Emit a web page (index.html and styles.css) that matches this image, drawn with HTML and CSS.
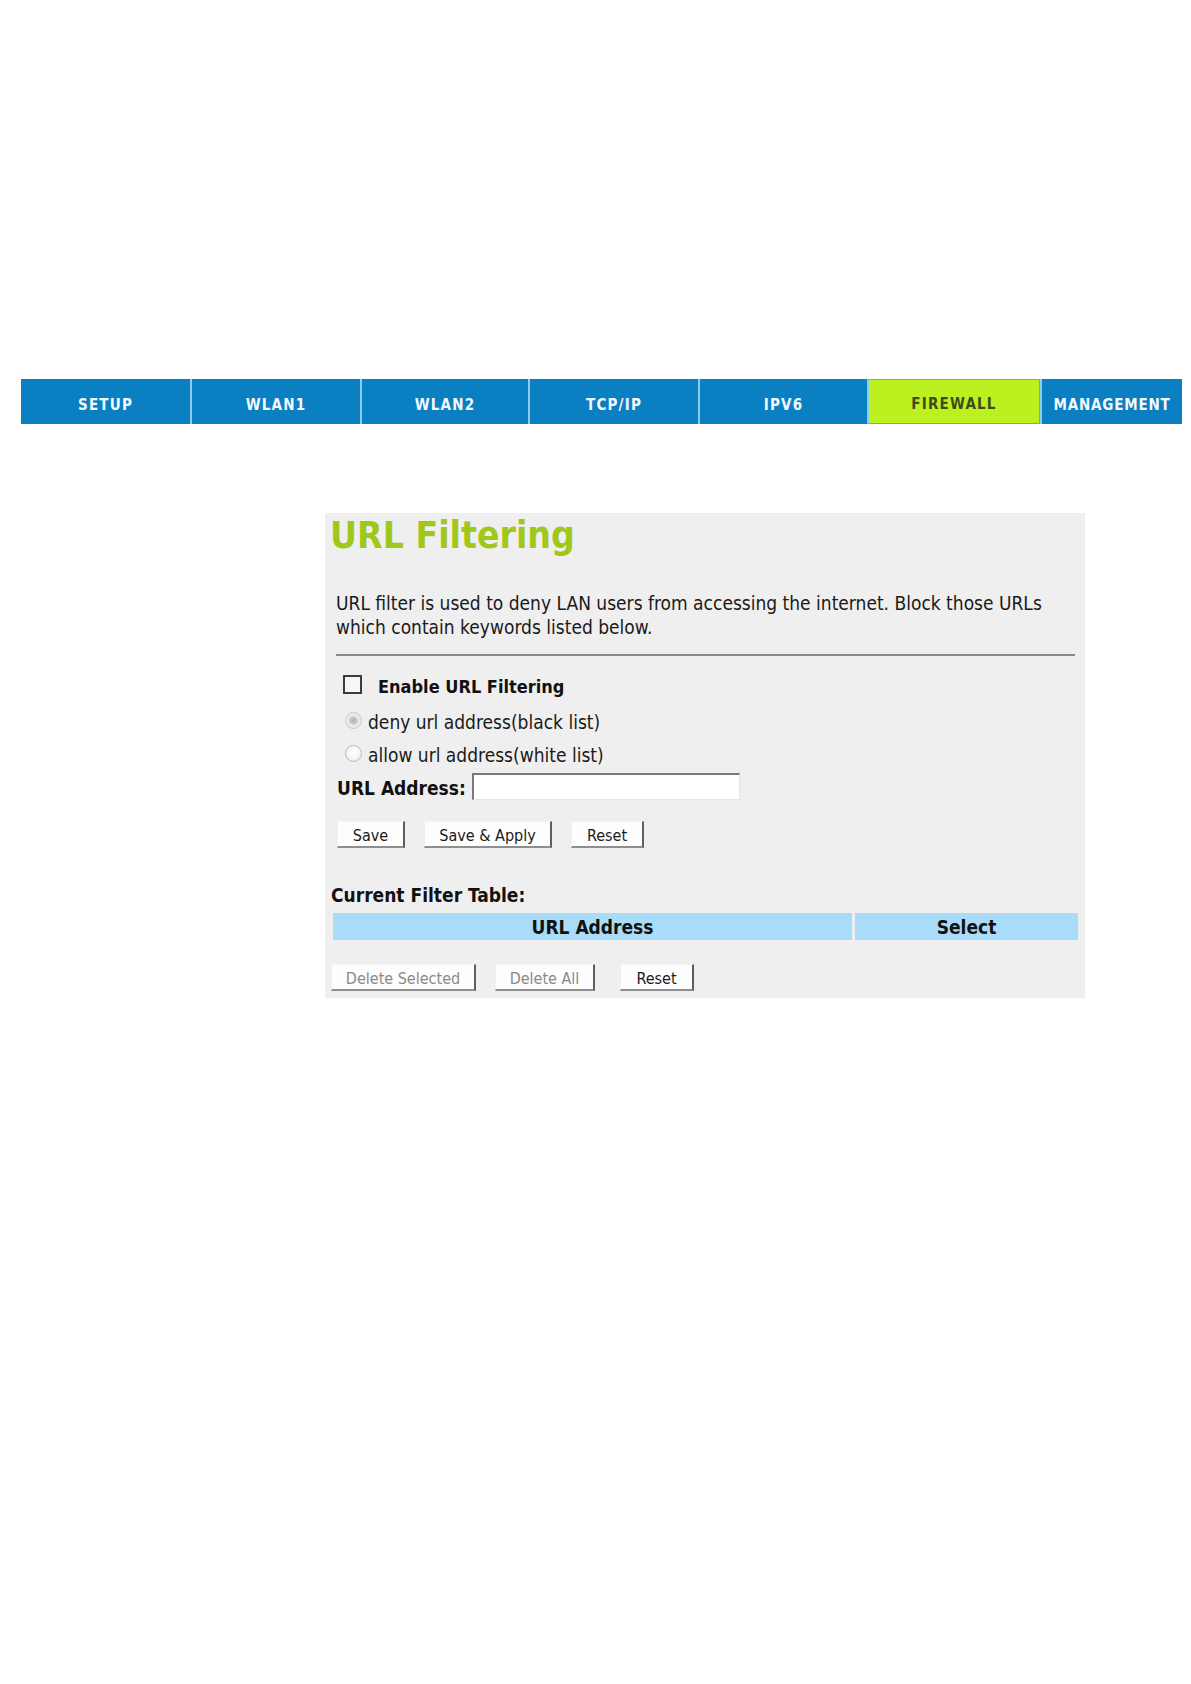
FILE: index.html
```html
<!DOCTYPE html>
<html lang="en">
<head>
<meta charset="utf-8">
<title>URL Filtering</title>
<link rel="stylesheet" href="styles.css">
</head>
<body>
<nav class="nav">
  <a class="tab">SETUP</a>
  <a class="tab">WLAN1</a>
  <a class="tab">WLAN2</a>
  <a class="tab">TCP/IP</a>
  <a class="tab">IPV6</a>
  <a class="tab active">FIREWALL</a>
  <a class="tab">MANAGEMENT</a>
</nav>

<section class="panel">
  <h1 class="title">URL Filtering</h1>
  <p class="desc">URL filter is used to deny LAN users from accessing the internet. Block those URLs which contain keywords listed below.</p>
  <div class="rule"></div>

  <label class="row row-enable">
    <input type="checkbox" class="check">
    <span class="bold-label enable-label">Enable URL Filtering</span>
  </label>
  <label class="row row-deny">
    <input type="radio" name="mode" class="radio radio-checked" checked disabled>
    <span class="opt">deny url address(black list)</span>
  </label>
  <label class="row row-allow">
    <input type="radio" name="mode" class="radio" disabled>
    <span class="opt">allow url address(white list)</span>
  </label>
  <div class="row row-url">
    <span class="bold-label url-label">URL Address:</span>
    <input type="text" class="text-input">
  </div>
  <div class="btn-row top-btns">
    <button class="btn btn-save">Save</button>
    <button class="btn btn-apply">Save &amp; Apply</button>
    <button class="btn btn-reset">Reset</button>
  </div>

  <div class="table-title">Current Filter Table:</div>
  <div class="filter-table">
    <div class="th th-url">URL Address</div>
    <div class="th th-select">Select</div>
  </div>
  <div class="btn-row bottom-btns">
    <button class="btn btn-del-sel" disabled>Delete Selected</button>
    <button class="btn btn-del-all" disabled>Delete All</button>
    <button class="btn btn-reset2">Reset</button>
  </div>
</section>
</body>
</html>
```

FILE: styles.css
```css
html, body {
  margin: 0;
  padding: 0;
  background: #ffffff;
}

body {
  font-family: "DejaVu Sans Condensed", "DejaVu Sans", sans-serif;
  font-stretch: condensed;
  color: #1a1a1a;
  width: 1191px;
  min-height: 1684px;
}

/* ---------- navigation ---------- */
.nav {
  margin: 379px 0 0 21px;
  width: 1161px;
  height: 45px;
  display: grid;
  grid-template-columns: 169px 170px 168px 170px 169px 173px 142px;
  background: #0a80c2;
}

.tab {
  display: flex;
  align-items: center;
  justify-content: center;
  padding-top: 6px;
  background: #0a80c2;
  color: #f4f9fc;
  font-family: "DejaVu Sans Condensed", "DejaVu Sans", sans-serif;
  font-stretch: condensed;
  font-weight: bold;
  font-size: 15px;
  letter-spacing: 1.2px;
  border-left: 2px solid #8cccee;
  box-sizing: border-box;
}

.tab:first-child {
  border-left: none;
}

.tab.active {
  background: #bdf01f;
  color: #3e4c1c;
  border: 1px solid #7aa3b8;
  border-left: 2px solid #8cccee;
  padding-top: 5px;
}

.tab:last-child {
  letter-spacing: 0.8px;
}

/* ---------- panel ---------- */
.panel {
  margin: 89px 0 0 325px;
  width: 760px;
  height: 485px;
  background: #efefef;
  box-sizing: border-box;
  padding-top: 3px;
}

.title {
  margin: 0;
  padding-left: 5px;
  font-size: 37px;
  line-height: 40px;
  font-weight: bold;
  color: #9fc81a;
}

.desc {
  margin: 35px 0 0 11px;
  width: 725px;
  font-size: 19px;
  line-height: 24px;
}

.rule {
  margin: 15px 0 0 11px;
  width: 739px;
  height: 2px;
  background: #8a8a8a;
}

.row {
  display: flex;
  align-items: center;
}

.row-enable {
  margin-top: 11px;
  height: 35px;
  padding-left: 18px;
}

.row-deny {
  height: 36px;
  padding-left: 20px;
}

.row-allow {
  height: 30px;
  padding-left: 20px;
}

.row-url {
  height: 37px;
  padding-left: 12px;
}

.bold-label {
  font-weight: bold;
  font-size: 19px;
  line-height: 23px;
  color: #111;
}

.enable-label {
  font-size: 18px;
  margin-left: 16px;
  padding-top: 4px;
}

.check {
  appearance: none;
  -webkit-appearance: none;
  margin: 0;
  width: 19px;
  height: 19px;
  border: 2px solid #3c3c3c;
  background: #f6f6f6;
  box-sizing: border-box;
}

.radio {
  appearance: none;
  -webkit-appearance: none;
  margin: 0;
  width: 17px;
  height: 17px;
  border-radius: 50%;
  border: 1px solid #b8b8b8;
  background: radial-gradient(circle at 50% 45%, #ffffff 0%, #f4f4f4 60%, #e2e2e2 100%);
  box-sizing: border-box;
}

.radio-checked {
  border-color: #c9c9c9;
  background: radial-gradient(circle, #b7b7b7 0, #c4c4c4 3.5px, #e6e6e6 4.5px, #ececec 100%);
}

.opt {
  margin-left: 6px;
  font-size: 19px;
  line-height: 23px;
  padding-top: 4px;
  color: #1a1a1a;
}

.url-label {
  padding-top: 3px;
}

.text-input {
  margin: 0 0 0 6px;
  width: 268px;
  height: 27px;
  box-sizing: border-box;
  border-top: 2px solid #7a7a7a;
  border-left: 2px solid #7a7a7a;
  border-right: 1px solid #e4e4e4;
  border-bottom: 1px solid #e4e4e4;
  background: #ffffff;
  padding: 0 4px;
  font: inherit;
}

/* ---------- buttons ---------- */
.btn-row {
  display: flex;
  gap: 19px;
}

.top-btns {
  margin-top: 16px;
  padding-left: 12px;
}

.bottom-btns {
  margin-top: 24px;
  padding-left: 6px;
}

.btn {
  height: 27px;
  box-sizing: border-box;
  margin: 0;
  padding: 2px 0 0 0;
  background: #fdfdfd;
  border-top: 1px solid #f4f4f4;
  border-left: 1px solid #f0f0f0;
  border-right: 2px solid #5e5e5e;
  border-bottom: 2px solid #8e8e8e;
  font-family: "DejaVu Sans Condensed", "DejaVu Sans", sans-serif;
  font-stretch: condensed;
  font-size: 16px;
  color: #1a1a1a;
  text-align: center;
}

.btn:disabled {
  color: #8a8a8a;
}

.btn-save { width: 68px; }
.btn-apply { width: 128px; }
.btn-reset { width: 73px; }
.btn-del-sel { width: 145px; }
.btn-del-all { width: 100px; }
.btn-reset2 { width: 74px; margin-left: 6px; }

/* ---------- table ---------- */
.table-title {
  margin: 36px 0 0 6px;
  font-size: 19px;
  line-height: 23px;
  font-weight: bold;
  color: #111;
}

.filter-table {
  margin: 6px 0 0 8px;
  width: 745px;
  height: 27px;
  display: grid;
  grid-template-columns: 519px 223px;
  column-gap: 3px;
}

.th {
  background: #a9dcf8;
  display: flex;
  align-items: center;
  justify-content: center;
  font-weight: bold;
  font-size: 19px;
  color: #111;
}
```
